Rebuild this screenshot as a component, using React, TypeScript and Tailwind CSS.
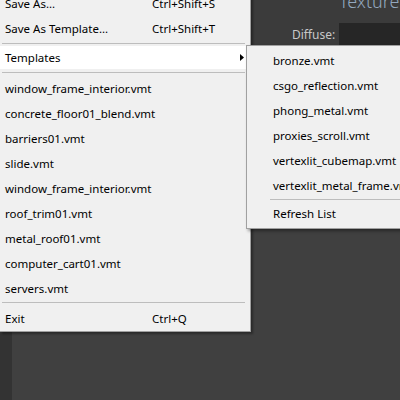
const recent = [
  'window_frame_interior.vmt',
  'concrete_floor01_blend.vmt',
  'barriers01.vmt',
  'slide.vmt',
  'window_frame_interior.vmt',
  'roof_trim01.vmt',
  'metal_roof01.vmt',
  'computer_cart01.vmt',
  'servers.vmt',
];

const templates = [
  'bronze.vmt',
  'csgo_reflection.vmt',
  'phong_metal.vmt',
  'proxies_scroll.vmt',
  'vertexlit_cubemap.vmt',
  'vertexlit_metal_frame.vmt',
];

function MenuItem({ label, shortcut, className = '' }: { label: string; shortcut?: string; className?: string }) {
  return (
    <div className={`flex items-center h-[25px] pl-[5px] ${className}`}>
      <span className="w-[147px] shrink-0 whitespace-nowrap">{label}</span>
      {shortcut && <span className="whitespace-nowrap">{shortcut}</span>}
    </div>
  );
}

function Separator({ h, offset }: { h: string; offset: string }) {
  return (
    <div className={`${h} ${offset} px-[2px]`}>
      <div className="h-px bg-[#bdbdbd] w-[243px]" />
    </div>
  );
}

export default function App() {
  return (
    <div
      className="relative w-[400px] h-[400px] overflow-hidden flex bg-[#404040] text-[11.5px] text-black"
      style={{ fontFamily: '"Noto Sans", "Open Sans", sans-serif' }}
    >
      <div className="w-[12px] bg-[#333333] shrink-0" />
      <div className="flex-1 flex flex-col">
        <div className="h-[50px] bg-[#3b3b3b] flex flex-col">
          <div className="h-[20px] w-full relative">
            <span className="absolute left-[327px] top-[-8px] text-[18px] font-light text-[#93a8bf] leading-none whitespace-nowrap">
              Texture
            </span>
          </div>
          <div className="flex items-center w-full h-[23px] mt-[3px]">
            <span className="ml-[280px] text-[#c8c8c8] text-[12px] w-[47px]">Diffuse:</span>
            <div className="flex-1 h-[23px] bg-[#262626]" />
          </div>
        </div>
      </div>

      {/* main menu */}
      <div className="absolute left-0 top-[-9px] w-[251px] bg-[#f0f0f0] border-r border-b border-[#a0a0a0] shadow-[2px_2px_2px_rgba(0,0,0,0.35)]">
        <MenuItem label="Save As..." shortcut="Ctrl+Shift+S" />
        <MenuItem label="Save As Template..." shortcut="Ctrl+Shift+T" />
        <Separator h="h-[5px]" offset="pt-[2px]" />
        <div className="relative flex items-center h-[23px] pl-[5px] bg-white">
          <span>Templates</span>
          <svg className="absolute left-[240px] top-[8px]" width="4" height="7" viewBox="0 0 4 7">
            <path d="M0 0 L4 3.5 L0 7 Z" fill="#000" />
          </svg>
        </div>
        <Separator h="h-[7px]" offset="pt-[3px]" />
        {recent.map((r, i) => (
          <MenuItem key={i} label={r} />
        ))}
        <Separator h="h-[5px]" offset="pt-[1px]" />
        <MenuItem label="Exit" shortcut="Ctrl+Q" />
      </div>

      {/* templates submenu */}
      <div className="absolute left-[246px] top-[45px] w-[170px] bg-[#f0f0f0] border border-[#a0a0a0] pt-[2px] pb-[3px] shadow-[2px_2px_3px_rgba(0,0,0,0.4)]">
        {templates.map((t) => (
          <div key={t} className="flex items-center h-[25px] pl-[26px] whitespace-nowrap">
            {t}
          </div>
        ))}
        <div className="h-[5px] pt-[1px] pl-[23px]">
          <div className="h-px bg-[#bdbdbd]" />
        </div>
        <div className="flex items-center h-[22px] pl-[26px]">Refresh List</div>
      </div>
    </div>
  );
}
